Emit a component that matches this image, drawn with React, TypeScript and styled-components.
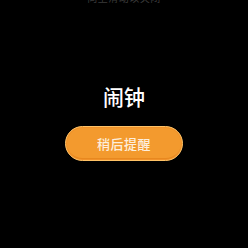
import React from "react";
import styled, { createGlobalStyle } from "styled-components";

const Global = createGlobalStyle`
  html, body { margin: 0; padding: 0; background: #000; }
  body { font-family: "Noto Sans CJK SC", "Noto Sans", sans-serif; }
`;

const Screen = styled.div`
  width: 248px;
  height: 248px;
  background: #000;
  display: flex;
  flex-direction: column;
  align-items: center;
  overflow: hidden;
`;

const Hint = styled.div`
  margin-top: -9px;
  font-size: 10px;
  line-height: 14px;
  color: #3a3a3a;
  letter-spacing: 0.5px;
`;

const Title = styled.h1`
  margin: 77px 0 0;
  font-size: 21px;
  line-height: 28px;
  font-weight: 500;
  color: #fff;
`;

const SnoozeButton = styled.button`
  margin-top: 16px;
  width: 118px;
  height: 35px;
  border-radius: 18px;
  border: 1.5px solid #ffc266;
  background: #f39a2e;
  box-shadow: inset 0 0 0 1px #f0912a, inset 0 -2px 0 #e8881f;
  color: #fdeedc;
  font-family: "Noto Sans CJK SC", sans-serif;
  font-size: 13px;
  font-weight: 500;
  letter-spacing: 0.5px;
  display: flex;
  align-items: center;
  justify-content: center;
  padding: 0;
`;

export default function App() {
  return (
    <>
      <Global />
      <Screen>
        <Hint>向上滑动以关闭</Hint>
        <Title>闹钟</Title>
        <SnoozeButton>稍后提醒</SnoozeButton>
      </Screen>
    </>
  );
}
